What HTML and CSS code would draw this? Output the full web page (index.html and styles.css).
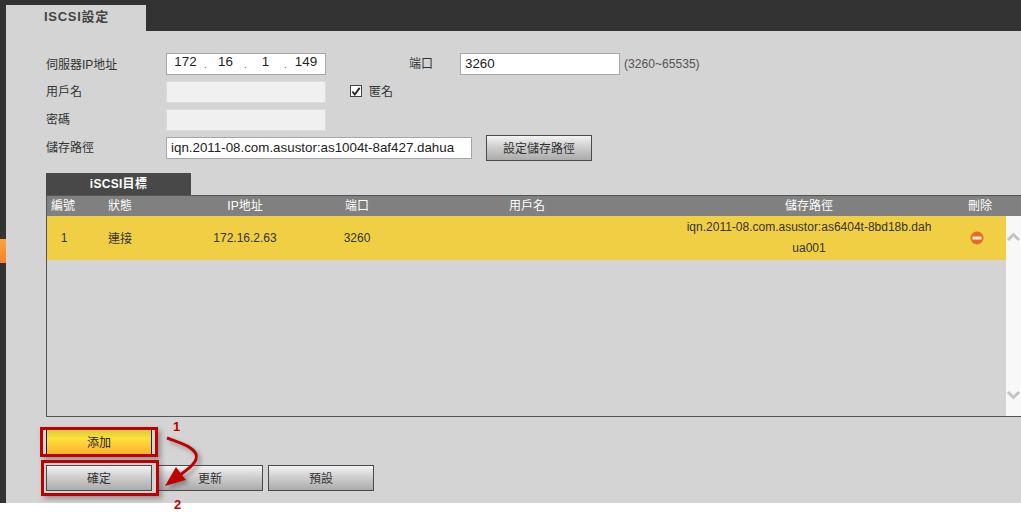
FILE: index.html
```html
<!DOCTYPE html>
<html lang="zh-Hant">
<head>
<meta charset="utf-8">
<title>iSCSI設定</title>
<link rel="stylesheet" href="styles.css">
</head>
<body>
<div class="app">
  <div class="topbar"><div class="main-tab">ISCSI設定</div></div>
  <div class="content">
    <div class="form">
      <div class="label">伺服器IP地址</div>
      <div class="input ip"><span>172</span><i>.</i><span>16</span><i>.</i><span>1</span><i>.</i><span>149</span></div>
      <div class="label port-label">端口</div>
      <div class="port-wrap"><div class="input port">3260</div><span class="hint">(3260~65535)</span></div>

      <div class="label">用戶名</div>
      <div class="input disabled"></div>
      <label class="anon"><span class="check"><svg width="11" height="11" viewBox="0 0 11 11"><path d="M1.5 5.5 4.2 8.8 9.5 1.5" fill="none" stroke="#222" stroke-width="2"/></svg></span>匿名</label>

      <div class="label">密碼</div>
      <div class="input disabled"></div>
      <div class="blank"></div>

      <div class="label">儲存路徑</div>
      <div class="path-row">
        <div class="input path">iqn.2011-08.com.asustor:as1004t-8af427.dahua</div>
        <button class="btn set-path">設定儲存路徑</button>
      </div>
    </div>

    <div class="sub-tab">iSCSI目標</div>
    <div class="table">
      <div class="thead">
        <div class="th-no">編號</div><div>狀態</div><div>IP地址</div><div>端口</div><div>用戶名</div><div>儲存路徑</div><div>刪除</div>
      </div>
      <div class="tbody">
        <div class="rows">
          <div class="tr">
            <div>1</div><div class="state">連接</div><div>172.16.2.63</div><div>3260</div><div></div>
            <div class="path-cell">iqn.2011-08.com.asustor:as6404t-8bd18b.dah<br>ua001</div>
            <div><svg width="14" height="14" viewBox="0 0 14 14"><circle cx="7" cy="7" r="6.5" fill="#ea6a1e"/><rect x="2.5" y="5.5" width="9" height="3" fill="#f7efe6"/></svg></div>
          </div>
        </div>
        <div class="scrollbar">
          <svg width="15" height="12" viewBox="0 0 15 12"><path d="M2 9 7.5 3.5 13 9" fill="none" stroke="#c4c4c4" stroke-width="3"/></svg>
          <svg width="15" height="12" viewBox="0 0 15 12"><path d="M2 3 7.5 8.5 13 3" fill="none" stroke="#c4c4c4" stroke-width="3"/></svg>
        </div>
      </div>
    </div>

    <div class="add-row"><button class="btn add">添加</button></div>
    <div class="actions">
      <button class="btn">確定</button>
      <button class="btn">更新</button>
      <button class="btn">預設</button>
    </div>
  </div>
</div>

<div class="marker"></div>
<div class="note-box box-add"></div>
<div class="note-box box-ok"></div>
<div class="note-num num-1">1</div>
<div class="note-num num-2">2</div>
<svg class="arrow" width="60" height="70" viewBox="0 0 60 70">
  <defs><filter id="s" x="-30%" y="-30%" width="170%" height="170%"><feDropShadow dx="3" dy="3" stdDeviation="2" flood-color="#555" flood-opacity=".55"/></filter></defs>
  <g filter="url(#s)">
    <path d="M7 8C20 13 32 16 36 24 39 32 27 40 20 45" fill="none" stroke="#bf0000" stroke-width="3"/>
    <path d="M5 56 16 37 26 50Z" fill="#bf0000"/>
  </g>
</svg>
</body>
</html>
```
FILE: styles.css
```css
* { box-sizing: border-box; }
html, body { margin: 0; padding: 0; }
body {
  width: 1021px;
  height: 524px;
  overflow: hidden;
  position: relative;
  background: #fff;
  font-family: "Liberation Sans", "Noto Sans CJK TC", sans-serif;
  font-size: 12px;
  color: #333;
}
.app {
  height: 503px;
  border-left: 6px solid #333;
  background: #d4d4d4;
  display: flex;
  flex-direction: column;
}
.topbar {
  height: 31px;
  margin-left: -1px;
  padding: 5px 0 0 1px;
  background: #333;
  flex: none;
}
.main-tab {
  width: 140px;
  height: 26px;
  background: #d4d4d4;
  color: #444;
  font-weight: bold;
  font-size: 13px;
  line-height: 24px;
  padding-left: 38px;
  letter-spacing: .7px;
}
.content { padding: 22px 0 0 40px; flex: 1; }
.form {
  display: grid;
  grid-template-columns: 120px 160px 134px 1fr;
  grid-auto-rows: 22px;
  row-gap: 6px;
  align-items: center;
}
.label { font-size: 12px; color: #333; line-height: 22px; }
.form > .label:first-child { padding-top: 2px; }
.port-label { padding-left: 83px; }
.input {
  height: 22px;
  background: #fff;
  border: 1px solid #a6a6a6;
  font-size: 13.35px;
  line-height: 20px;
  color: #222;
}
.input.disabled { background: #f0f0f0; border-color: #dcdcdc; }
.ip {
  display: grid;
  grid-template-columns: 31px 9px 31px 9px 31px 9px 1fr;
  padding: 0 3px;
  text-align: center;
  line-height: 15px;
}
.ip i { font-style: normal; font-size: 10px; line-height: 22px; color: #666; }
.port-wrap { display: flex; align-items: center; gap: 4px; }
.port { width: 160px; padding-left: 4px; }
.hint { font-size: 12.1px; color: #555; }
.anon { display: flex; align-items: center; gap: 7px; padding: 0 0 3px 24px; font-size: 12px; grid-column: 3 / 5; }
.blank { grid-column: 3 / 5; }
.check {
  width: 12px; height: 12px;
  border: 1px solid #444;
  background: #fff;
  display: flex;
  align-items: center;
  justify-content: center;
  margin-top: 1px;
}
.path-row { grid-column: 2 / 5; display: flex; align-items: center; gap: 14px; }
.path { width: 306px; padding-left: 4px; white-space: nowrap; }
.btn {
  display: block;
  width: 106px;
  height: 26px;
  padding: 0 0 2px;
  border: 1px solid #4a4a4a;
  background: linear-gradient(#f4f4f4, #cfcfcf 45%, #ababab);
  color: #333;
  font: 12px "Liberation Sans", "Noto Sans CJK TC", sans-serif;
}
.set-path { height: 26px; }
.sub-tab {
  margin-top: 14px;
  width: 145px;
  height: 22px;
  background: #484848;
  color: #fff;
  font-weight: bold;
  font-size: 12px;
  letter-spacing: .3px;
  line-height: 22px;
  text-align: center;
}
.table {
  height: 222px;
  border-top: 1px solid #555;
  border-left: 1px solid #555;
  border-bottom: 1px solid #555;
  display: flex;
  flex-direction: column;
}
.thead, .tr {
  display: grid;
  grid-template-columns: 34px 78px 172px 52px 288px 276px 59px;
  text-align: center;
  align-items: center;
}
.thead {
  flex: none;
  height: 20px;
  background: #808080;
  color: #fff;
  line-height: 20px;
}
.thead > div:last-child { white-space: nowrap; width: 66px; }
.th-no { padding-right: 2px; }
.tbody { flex: 1; display: flex; min-height: 0; }
.rows { width: 959px; }
.tr { height: 44px; background: #f1cf44; color: #333; }
.state { font-size: 12px; padding-bottom: 2px; }
.path-cell { line-height: 21px; }
.tr svg { display: block; margin: 0 auto; }
.scrollbar {
  flex: 1;
  background: #f8f8f8;
  display: flex;
  flex-direction: column;
  justify-content: space-between;
  padding: 15px 0 15px;
}
.scrollbar svg { display: block; }
.add-row { margin-top: 12px; }
.add {
  background: linear-gradient(#d9ca3d, #ffe03a 35%, #ffb12e);
  border-color: #222;
  color: #222;
}
.actions { display: flex; gap: 5px; margin-top: 10px; }
.marker { position: absolute; left: 0; top: 239px; width: 6px; height: 24px; background: linear-gradient(#f9a63a, #f5812a); }
.note-box { position: absolute; border: 3px solid #bf0000; box-shadow: 3px 3px 5px rgba(70,70,70,.45); }
.box-add { left: 40px; top: 427px; width: 118px; height: 30px; }
.box-ok { left: 41px; top: 460px; width: 118px; height: 36px; }
.note-num { position: absolute; color: #bf0000; font-weight: bold; font-size: 13px; line-height: 14px; }
.num-1 { left: 173px; top: 420px; }
.num-2 { left: 174px; top: 498px; }
.arrow { position: absolute; left: 160px; top: 430px; }
```
